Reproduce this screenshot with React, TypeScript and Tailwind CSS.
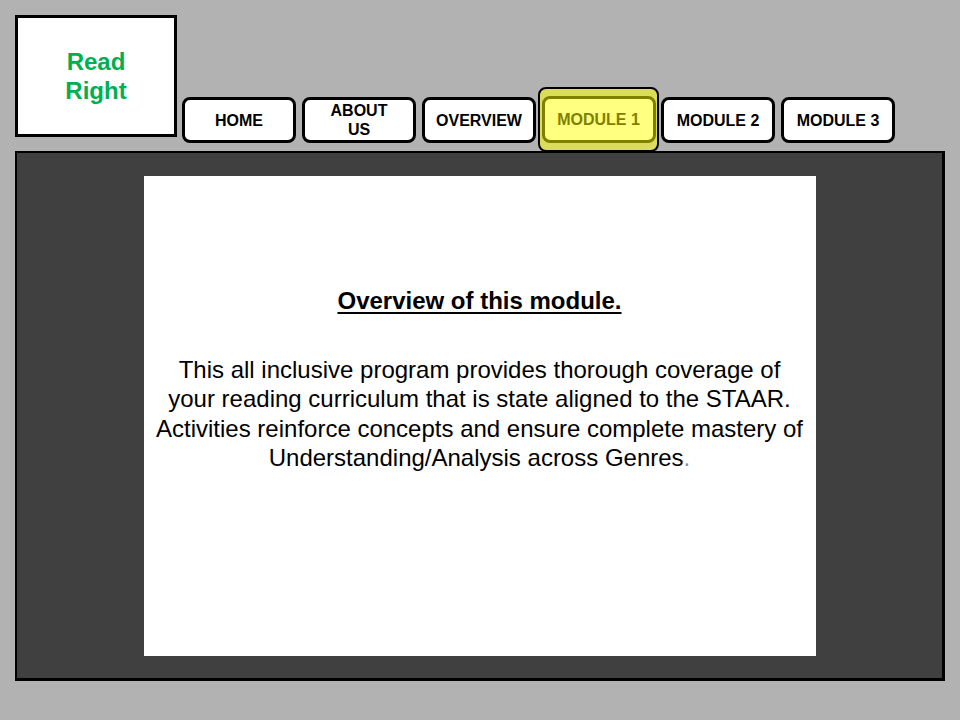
const navItems = ["HOME", "ABOUT US", "OVERVIEW", "MODULE 1", "MODULE 2", "MODULE 3"];

function NavButton({ label }: { label: string }) {
  if (label === "MODULE 1") {
    return (
      <div className="-mx-[4px] flex h-[65px] w-[121px] items-center justify-center self-start rounded-[8px] border-2 border-black bg-[#dcdc5c]">
        <div className="flex h-[47px] w-[114px] items-center justify-center rounded-[8px] border-[3px] border-[#808000] bg-[#ffff80] text-[16px] font-bold text-[#808000]">
          {label}
        </div>
      </div>
    );
  }
  return (
    <div className="flex h-[46px] w-[114px] items-center justify-center rounded-[8px] border-[3px] border-black bg-white text-center text-[16px] leading-[19px] font-bold whitespace-nowrap text-black">
      {label === "ABOUT US" ? (
        <span>
          ABOUT
          <br />
          US
        </span>
      ) : (
        label
      )}
    </div>
  );
}

export default function App() {
  return (
    <div className="h-[720px] w-[960px] bg-[#b2b2b2] pt-[15px] pl-[15px] font-['Liberation_Sans',Arial,sans-serif]">
      <div className="flex h-[136px] items-start">
        <div className="flex h-[122px] w-[162px] flex-col items-center justify-center border-[3px] border-black bg-white text-center text-[24px] leading-[29px] font-bold text-[#00b050]">
          <span>Read</span>
          <span>Right</span>
        </div>
        <nav className="mt-[72px] ml-[5px] flex h-[66px] items-center gap-[6px]">
          {navItems.map((item) => (
            <NavButton key={item} label={item} />
          ))}
        </nav>
      </div>
      <main className="h-[530px] w-[930px] border-2 border-r-[3px] border-b-[3px] border-black bg-[#404040] pt-[23px]">
        <section className="mx-auto h-[480px] w-[672px] bg-white pt-[110px] text-center text-[24px] leading-[29.5px] text-black">
          <h2 className="font-bold underline underline-offset-[3px]">Overview of this module.</h2>
          <p className="mt-[39px] whitespace-nowrap">
            This all inclusive program provides thorough coverage of
            <br />
            your reading curriculum that is state aligned to the STAAR.
            <br />
            Activities reinforce concepts and ensure complete mastery of
            <br />
            Understanding/Analysis across Genres<span className="text-[#8c8c8c]">.</span>
          </p>
        </section>
      </main>
    </div>
  );
}
